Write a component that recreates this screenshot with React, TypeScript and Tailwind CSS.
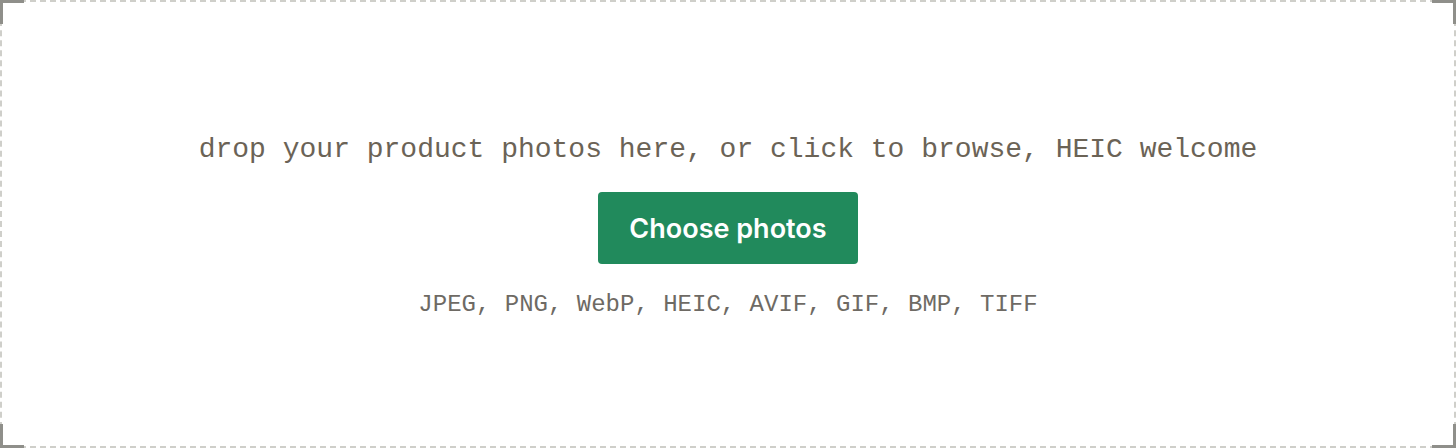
export default function App() {
  return (
    <div className="w-[1456px] h-[448px] bg-white">
      <div className="relative h-full w-full border-2 border-dashed border-[#cfcfca] flex flex-col items-center pt-[130px]">
        <span className="absolute -left-[2px] -top-[2px] w-6 h-6 border-l-[3px] border-t-[3px] border-[#8f8f8a]" />
        <span className="absolute -right-[2px] -top-[2px] w-6 h-6 border-r-[3px] border-t-[3px] border-[#8f8f8a]" />
        <span className="absolute -left-[2px] -bottom-[2px] w-6 h-6 border-l-[3px] border-b-[3px] border-[#8f8f8a]" />
        <span className="absolute -right-[2px] -bottom-[2px] w-6 h-6 border-r-[3px] border-b-[3px] border-[#8f8f8a]" />

        <p className="font-['Liberation_Mono',monospace] text-[28px] leading-9 text-[#6b6356]">
          drop your product photos here, or click to browse, HEIC welcome
        </p>
        <button className="mt-6 w-[260px] h-[72px] pt-[2px] rounded bg-[#218a5c] text-white font-['Inter',sans-serif] font-semibold text-[27px]">
          Choose photos
        </button>
        <p className="mt-[25px] font-['Liberation_Mono',monospace] text-[24px] leading-8 text-[#6e6a64]">
          JPEG, PNG, WebP, HEIC, AVIF, GIF, BMP, TIFF
        </p>
      </div>
    </div>
  );
}
